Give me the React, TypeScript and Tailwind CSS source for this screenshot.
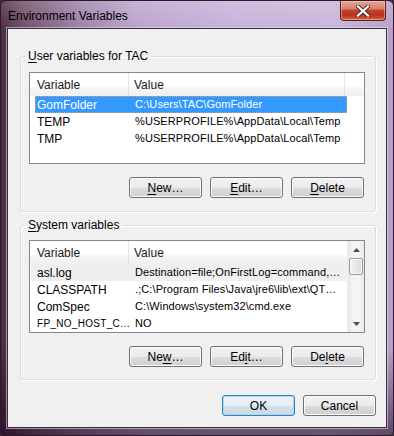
import React, { FC } from 'react';

type EnvRow = { name: string; value: string; tight?: boolean };

const userRows: EnvRow[] = [
  { name: 'GomFolder', value: 'C:\\Users\\TAC\\GomFolder' },
  { name: 'TEMP', value: '%USERPROFILE%\\AppData\\Local\\Temp' },
  { name: 'TMP', value: '%USERPROFILE%\\AppData\\Local\\Temp' },
];

const systemRows: EnvRow[] = [
  { name: 'asl.log', value: 'Destination=file;OnFirstLog=command,…' },
  { name: 'CLASSPATH', value: '.;C:\\Program Files\\Java\\jre6\\lib\\ext\\QT…' },
  { name: 'ComSpec', value: 'C:\\Windows\\system32\\cmd.exe' },
  { name: 'FP_NO_HOST_C…', value: 'NO', tight: true },
];

// text with one underlined access key
const AccessKey: FC<{ text: string; at: number }> = ({ text, at }) => (
  <span>
    {text.slice(0, at)}
    <u className="underline-offset-[2px]">{text[at]}</u>
    {text.slice(at + 1)}
  </span>
);

const WinButton: FC<{ label: string; keyAt?: number; isDefault?: boolean }> = ({
  label,
  keyAt,
  isDefault,
}) => (
  <button
    className={
      isDefault
        ? 'w-[73px] h-[21px] rounded-[3px] border border-[#3c7fb1] bg-[linear-gradient(#eef4f8_0%,#e6eef4_50%,#d6e2ea_51%,#ccd9e2_100%)] shadow-[inset_0_0_0_1px_#9fdcf6] text-black leading-none'
        : 'w-[73px] h-[21px] rounded-[3px] border border-[#707070] bg-[linear-gradient(#f2f2f2_0%,#ebebeb_50%,#dddddd_51%,#cfcfcf_100%)] shadow-[inset_0_0_0_1px_#fbfbfb] text-black leading-none'
    }
  >
    {keyAt === undefined ? label : <AccessKey text={label} at={keyAt} />}
  </button>
);

const ScrollBar: FC = () => (
  <div className="w-[17px] h-full flex flex-col bg-[linear-gradient(90deg,#e6e6e6,#f4f4f4_30%,#f4f4f4_70%,#e9e9e9)] border-l border-[#f0f0f0]">
    <div className="h-[17px] flex items-center justify-center">
      <svg width="7" height="4" viewBox="0 0 7 4">
        <path d="M0 4 L3.5 0 L7 4 Z" fill="#4d4d4d" />
      </svg>
    </div>
    <div className="h-[17px] mx-[1px] rounded-[2px] border border-[#9a9a9a] bg-[linear-gradient(90deg,#f3f3f3,#e8e8e8_50%,#d9d9d9)] shadow-[inset_0_0_0_1px_#fafafa]" />
    <div className="flex-1" />
    <div className="h-[17px] flex items-center justify-center">
      <svg width="7" height="4" viewBox="0 0 7 4">
        <path d="M0 0 L3.5 4 L7 0 Z" fill="#4d4d4d" />
      </svg>
    </div>
  </div>
);

const ListView: FC<{
  rows: EnvRow[];
  heightClass: string;
  selected?: number;
  hot?: number;
  scroll?: boolean;
}> = ({ rows, heightClass, selected, hot, scroll }) => (
  <div className={`${heightClass} border border-[#828790] bg-white flex`}>
    <div className="flex-1 min-w-0 flex flex-col">
      <div className="h-[23px] flex bg-[linear-gradient(#ffffff_0%,#ffffff_55%,#f3f4f6_70%,#eef0f2_100%)] text-[#1a1a1a]">
        <div className="w-[99px] pl-[7px] flex items-center border-r border-[#e3e5e8]">
          Variable
        </div>
        <div
          className={
            scroll
              ? 'flex-1 pl-[5px] flex items-center'
              : 'w-[216px] pl-[5px] flex items-center border-r border-[#e3e5e8]'
          }
        >
          Value
        </div>
      </div>
      {rows.map((row, i) => {
        const isSelected = i === selected;
        const isHot = i === hot;
        return (
          <div
            key={row.name}
            className={
              isSelected
                ? 'ml-[5px] w-[312px] h-[17px] flex items-center bg-[#3399ff] text-white border border-dotted border-[#e0a060]'
                : isHot
                  ? 'ml-[1px] w-[316px] h-[17px] flex items-center bg-[#efefef] text-black'
                  : 'ml-[5px] w-[312px] h-[17px] flex items-center text-black'
            }
          >
            <div
              className={
                isHot
                  ? 'w-[104px] pl-[6px] shrink-0 whitespace-nowrap overflow-hidden'
                  : isSelected
                    ? 'w-[99px] pl-[1px] shrink-0 whitespace-nowrap overflow-hidden'
                    : row.tight
                      ? 'w-[100px] pl-[2px] shrink-0 whitespace-nowrap overflow-hidden text-[10px] tracking-[0.3px]'
                      : 'w-[100px] pl-[2px] shrink-0 whitespace-nowrap overflow-hidden'
              }
            >
              {row.name}
            </div>
            <div className="flex-1 min-w-0 whitespace-nowrap overflow-hidden text-[11px] tracking-[0.1px]">
              {row.value}
            </div>
          </div>
        );
      })}
    </div>
    {scroll && <ScrollBar />}
  </div>
);

const GroupBox: FC<{ title: React.ReactNode; className: string; children: React.ReactNode }> = ({
  title,
  className,
  children,
}) => (
  <fieldset
    className={`${className} ml-[12px] mr-[10px] rounded-[3px] border border-[#d5dfe5] shadow-[inset_1px_1px_0_#ffffff,1px_1px_0_#ffffff]`}
  >
    <legend className="ml-[4px] px-[3px] leading-[15px] text-black">{title}</legend>
    <div className="pl-[8px] pr-[10px]">{children}</div>
  </fieldset>
);

const CloseButton: FC = () => (
  <div className="w-[46px] h-[20px] self-start rounded-b-[4px] border border-t-0 border-[#5a1d14] bg-[linear-gradient(#e6a493_0%,#d8836f_40%,#c2402a_50%,#b8321e_75%,#d86448_100%)] shadow-[inset_0_0_0_1px_rgba(255,220,210,0.45)] flex items-center justify-center">
    <svg width="14" height="12" viewBox="0 0 14 12">
      <path
        d="M2 1.5 L7 6 L12 1.5 M2 10.5 L7 6 L12 10.5"
        stroke="#4a2a28"
        strokeWidth="4"
        strokeLinecap="square"
        fill="none"
      />
      <path
        d="M2 1.5 L7 6 L12 1.5 M2 10.5 L7 6 L12 10.5"
        stroke="#ffffff"
        strokeWidth="2.2"
        strokeLinecap="square"
        fill="none"
      />
    </svg>
  </div>
);

export default function App() {
  return (
    <div className="w-[394px] h-[436px] bg-[#3a2a3a] font-['Liberation_Sans',Arial,sans-serif] text-[12px]">
      <div className="w-full h-full rounded-t-[6px] rounded-b-[4px] border border-[#2c1a2a] flex flex-col bg-[linear-gradient(180deg,rgba(255,255,255,0.18)_0%,rgba(255,255,255,0)_7%,rgba(0,0,0,0)_80%,rgba(20,0,20,0.55)_100%),linear-gradient(90deg,#4a2a44_0%,#6e4e66_6%,#9c80a8_20%,#bba3cd_35%,#c6b1d8_60%,#c8b4da_85%,#b89ec8_100%)]">
        <div className="h-[27px] shrink-0 flex items-start justify-between">
          <div className="pl-[7px] pt-[8px] text-black leading-[15px]">Environment Variables</div>
          <div className="mr-[7px]">
            <CloseButton />
          </div>
        </div>
        <div className="mx-[6px] mb-[7px] flex-1 border border-[#3b2c3d] bg-[#f0f0f0] shadow-[0_0_0_1px_rgba(235,225,240,0.55)] flex flex-col">
          <GroupBox className="mt-[20px]" title={<AccessKey text="User variables for TAC" at={0} />}>
            <div className="pt-[8px]">
              <ListView rows={userRows} heightClass="h-[92px]" selected={0} />
            </div>
            <div className="mt-[13px] pb-[13px] pr-[1px] flex justify-end gap-[8px]">
              <WinButton label="New…" keyAt={0} />
              <WinButton label="Edit…" keyAt={0} />
              <WinButton label="Delete" keyAt={0} />
            </div>
          </GroupBox>
          <GroupBox className="mt-[6px]" title={<AccessKey text="System variables" at={0} />}>
            <div className="pt-[7px]">
              <ListView rows={systemRows} heightClass="h-[93px]" hot={0} scroll />
            </div>
            <div className="mt-[13px] pb-[12px] pr-[1px] flex justify-end gap-[8px]">
              <WinButton label="New…" keyAt={2} />
              <WinButton label="Edit…" keyAt={2} />
              <WinButton label="Delete" keyAt={2} />
            </div>
          </GroupBox>
          <div className="mt-[15px] mr-[10px] flex justify-end gap-[8px]">
            <WinButton label="OK" isDefault />
            <WinButton label="Cancel" />
          </div>
        </div>
      </div>
    </div>
  );
}
